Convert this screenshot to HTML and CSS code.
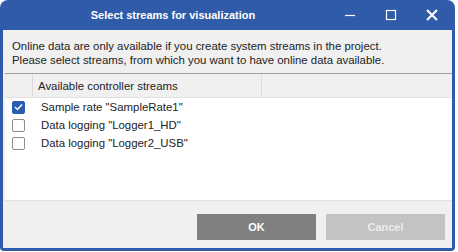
FILE: index.html
```html
<!DOCTYPE html>
<html lang="en">
<head>
    <meta charset="UTF-8">
    <title>Select streams for visualization</title>
    <link rel="stylesheet" href="styles.css">
</head>
<body>
    <div class="window">
        <div class="titlebar">
            <span class="title">Select streams for visualization</span>
            <div class="controls">
                <span class="ctl">
                    <svg width="12" height="12" viewBox="0 0 12 12"><path d="M1 6.5h10" stroke="#fff" stroke-width="1.2"/></svg>
                </span>
                <span class="ctl">
                    <svg width="12" height="12" viewBox="0 0 12 12"><rect x="1.5" y="1.5" width="9" height="9" fill="none" stroke="#fff" stroke-width="1.2"/></svg>
                </span>
                <span class="ctl">
                    <svg width="14" height="14" viewBox="0 0 14 14"><path d="M2 2l10 10M12 2L2 12" stroke="#fff" stroke-width="2"/></svg>
                </span>
            </div>
        </div>
        <div class="content">
            <p class="info">Online data are only available if you create system streams in the project.<br>Please select streams, from which you want to have online data available.</p>
            <div class="grid">
                <div class="grid-head">
                    <div class="col-check"></div>
                    <div class="col-name">Available controller streams</div>
                    <div class="col-rest"></div>
                </div>
                <div class="row">
                    <div class="col-check"><span class="box checked"><svg width="9" height="8" viewBox="0 0 9 8"><path d="M1 4l2.5 2.5L8 1.5" fill="none" stroke="#fff" stroke-width="1.4"/></svg></span></div>
                    <div class="col-name">Sample rate "SampleRate1"</div>
                </div>
                <div class="row">
                    <div class="col-check"><span class="box"></span></div>
                    <div class="col-name">Data logging "Logger1_HD"</div>
                </div>
                <div class="row">
                    <div class="col-check"><span class="box"></span></div>
                    <div class="col-name">Data logging "Logger2_USB"</div>
                </div>
            </div>
            <div class="footer">
                <button class="btn ok">OK</button>
                <button class="btn cancel">Cancel</button>
            </div>
        </div>
    </div>
</body>
</html>
```

FILE: styles.css
```css
body {
    margin: 0;
    background-color: #ffffff;
    font-family: "Liberation Sans", Arial, sans-serif;
    font-size: 11.4px;
    color: #222222;
}
.window {
    width: 455px;
    height: 251px;
    box-sizing: border-box;
    padding: 0 3px 3px 3px;
    background-color: #2f5ba8;
    border-radius: 8px 8px 4px 4px;
    display: flex;
    flex-direction: column;
}
.titlebar {
    height: 30px;
    display: flex;
    align-items: center;
    color: #ffffff;
}
.title {
    flex: 1;
    text-align: center;
    padding-left: 14px;
    font-weight: bold;
    font-size: 11px;
}
.controls {
    display: flex;
    align-items: center;
}
.ctl {
    width: 41px;
    height: 30px;
    display: flex;
    align-items: center;
    justify-content: center;
}
.content {
    flex: 1;
    background-color: #f0f0f0;
    display: flex;
    flex-direction: column;
}
.info {
    margin: 9px 0 6px 9px;
    line-height: 14px;
}
.grid {
    flex: 1;
    margin-left: 2px;
    background-color: #ffffff;
    border-top: 1px solid #a0a0a0;
}
.grid-head {
    height: 23px;
    display: flex;
    background-color: #f0f0f0;
    border-bottom: 1px solid #e2e2e2;
}
.grid-head .col-check,
.grid-head .col-name {
    border-right: 1px solid #dcdcdc;
}
.grid-head .col-name {
    width: 223px;
    padding-left: 5px;
    display: flex;
    align-items: center;
}
.col-check {
    width: 27px;
    display: flex;
    align-items: center;
    justify-content: center;
}
.col-rest {
    flex: 1;
}
.row {
    height: 18px;
    display: flex;
    align-items: center;
}
.row:first-of-type {
    margin-top: 1px;
}
.row .col-name {
    padding-left: 9px;
}
.box {
    width: 11px;
    height: 11px;
    border: 1px solid #8c8c8c;
    border-radius: 2px;
    background-color: #ffffff;
    display: flex;
    align-items: center;
    justify-content: center;
}
.box.checked {
    background-color: #2a5cb0;
    border-color: #2a5cb0;
}
.footer {
    height: 48px;
    border-top: 1px solid #e3e3e3;
    display: flex;
    justify-content: flex-end;
    align-items: flex-start;
    gap: 10px;
    padding: 13px 7px 0 0;
    box-sizing: border-box;
}
.btn {
    width: 119px;
    height: 26px;
    border: none;
    font-family: "Liberation Sans", Arial, sans-serif;
    font-size: 11px;
    font-weight: bold;
}
.ok {
    background-color: #808080;
    color: #ffffff;
}
.cancel {
    background-color: #c3c3c3;
    color: #ececec;
}
```
